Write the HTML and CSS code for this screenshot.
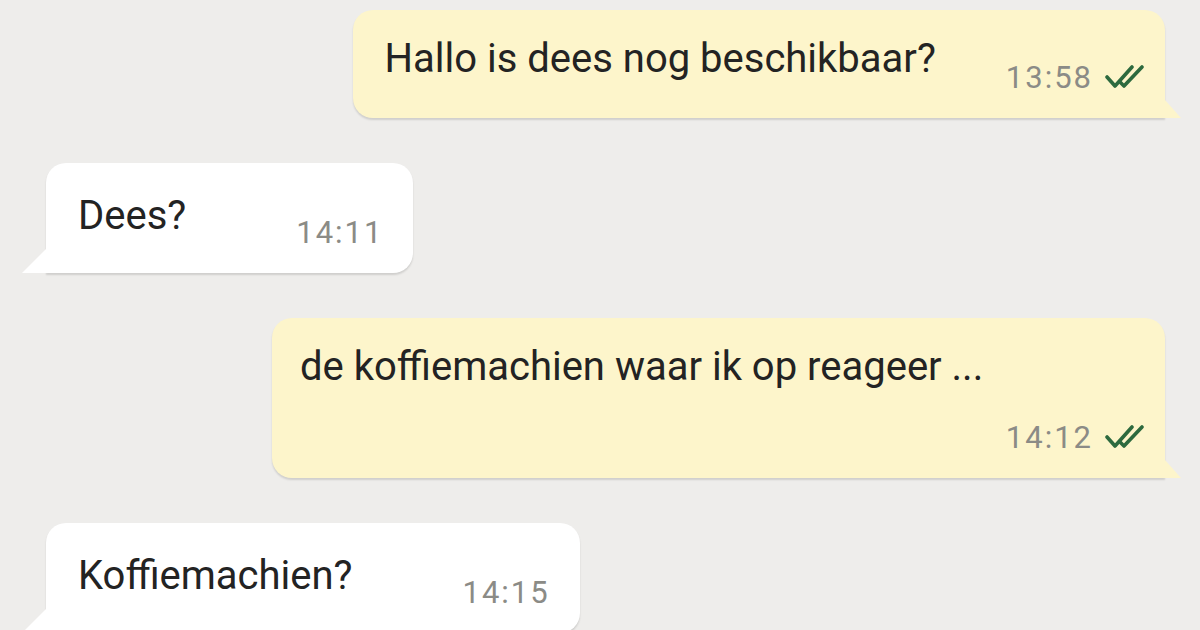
FILE: index.html
```html
<!DOCTYPE html>
<html lang="nl">

<head>
  <meta charset="UTF-8" />
  <meta name="viewport" content="width=device-width, initial-scale=1.0" />
  <title>Chat</title>
  <link rel="stylesheet" href="styles.css">
</head>

<body>
  <div class="chat">
    <div class="msg out">
      <div class="row">
        <p class="text">Hallo is dees nog beschikbaar?</p>
        <div class="meta">
          <span class="time">13:58</span>
          <svg class="ticks" viewBox="0 0 42 24" width="42" height="24">
            <path d="M2 12 L10 21 L27 2" />
            <path d="M15 17 L19 21 L37 2" />
          </svg>
        </div>
      </div>
    </div>

    <div class="msg in">
      <div class="row">
        <p class="text">Dees?</p>
        <div class="meta">
          <span class="time">14:11</span>
        </div>
      </div>
    </div>

    <div class="msg out long">
      <p class="text">de koffiemachien waar ik op reageer ...</p>
      <div class="meta">
        <span class="time">14:12</span>
        <svg class="ticks" viewBox="0 0 42 24" width="42" height="24">
          <path d="M2 12 L10 21 L27 2" />
          <path d="M15 17 L19 21 L37 2" />
        </svg>
      </div>
    </div>

    <div class="msg in">
      <div class="row">
        <p class="text">Koffiemachien?</p>
        <div class="meta">
          <span class="time">14:15</span>
        </div>
      </div>
    </div>
  </div>
</body>

</html>
```

FILE: styles.css
```css
* {
  margin: 0;
  padding: 0;
  box-sizing: border-box;
}

body {
  width: 1200px;
  height: 630px;
  overflow: hidden;
  background: #eeedeb;
  font-family: Roboto, "Liberation Sans", sans-serif;
  color: #232323;
}

.chat {
  display: flex;
  flex-direction: column;
  gap: 45px;
  padding: 10px 35px 0 46px;
}

/* bubbles */
.msg {
  position: relative;
  border-radius: 20px;
  box-shadow: 0 2px 2px rgba(0, 0, 0, 0.13);
}

.msg.out {
  align-self: flex-end;
  background: #fdf5cb;
  border-bottom-right-radius: 0;
  padding: 26px 18px 22px 31px;
}

.msg.in {
  align-self: flex-start;
  background: #fff;
  border-bottom-left-radius: 0;
  padding: 30px 30px 22px 32px;
}

/* tails */
.msg.out::after {
  content: "";
  position: absolute;
  right: -16px;
  bottom: 0;
  border-left: 16px solid #fdf5cb;
  border-top: 18px solid transparent;
}

.msg.in::after {
  content: "";
  position: absolute;
  left: -24px;
  bottom: 0;
  border-right: 24px solid #fff;
  border-top: 24px solid transparent;
}

.row {
  display: flex;
  align-items: flex-start;
}

.text {
  font-size: 40px;
  line-height: 46px;
  white-space: nowrap;
}

.row .text {
  padding-bottom: 14px;
}

.msg.in .row .text {
  padding-bottom: 12px;
}

.meta {
  display: flex;
  align-items: center;
  gap: 12px;
  align-self: flex-end;
  margin-left: 70px;
}

.msg.in .meta {
  margin-left: 110px;
}

.time {
  font-size: 31px;
  line-height: 36px;
  letter-spacing: 2px;
  color: #8b8b86;
}

.ticks {
  fill: none;
  stroke: #2d6a3e;
  stroke-width: 3.6;
  stroke-linecap: round;
  stroke-linejoin: round;
  margin-bottom: 2px;
}

/* long message: time on its own line */
.msg.long {
  width: 893px;
  display: flex;
  flex-direction: column;
  padding-left: 28px;
}

.msg.long .meta {
  margin-top: 30px;
}
```
